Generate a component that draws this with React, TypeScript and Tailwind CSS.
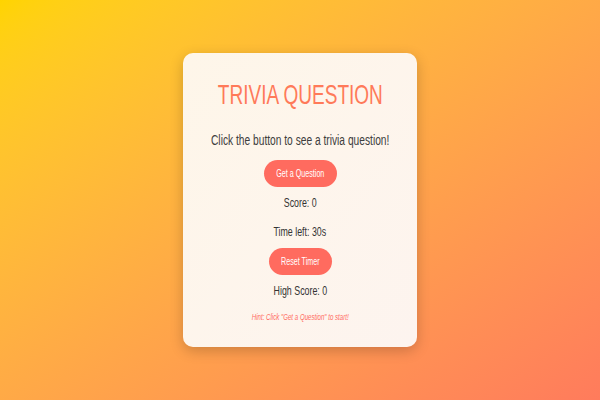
import type { ReactNode } from 'react';

// the reference font is much narrower than any installed family, so squeeze the text
function Narrow({ children, wide }: { children: ReactNode; wide?: boolean }) {
  return (
    <span className={`inline-block whitespace-nowrap ${wide ? 'scale-x-[0.73]' : 'scale-x-[0.68]'}`}>
      {children}
    </span>
  );
}

export default function App() {
  return (
    <div
      className="flex h-[400px] w-[600px] items-center justify-center bg-gradient-to-br from-[#ffd400] to-[#ff7b5c]"
      style={{ fontFamily: '"Liberation Sans", Arial, sans-serif' }}
    >
      <div className="flex h-[294px] w-[234px] flex-col items-center rounded-[10px] bg-gradient-to-br from-[#fef6e9] to-[#fdf4ef] pt-[28px] text-center shadow-[0_4px_14px_rgba(0,0,0,0.2)]">
        <h1 className="text-[28px] leading-none text-[#ff7a59]">
          <Narrow>TRIVIA QUESTION</Narrow>
        </h1>
        <p className="mt-[24px] text-[14px] leading-none text-[#3d3d3d]">
          <Narrow wide>Click the button to see a trivia question!</Narrow>
        </p>
        <button className="mt-[13px] h-[27px] w-[73px] rounded-full bg-[#ff6b5f] text-[10.5px] leading-none text-white">
          <Narrow>Get a Question</Narrow>
        </button>
        <p className="mt-[9px] text-[13px] leading-none text-[#333]">
          <Narrow>Score: 0</Narrow>
        </p>
        <p className="mt-[16px] text-[13px] leading-none text-[#333]">
          <Narrow>Time left: 30s</Narrow>
        </p>
        <button className="mt-[10px] h-[27px] w-[63px] rounded-full bg-[#ff6b5f] text-[10.5px] leading-none text-white">
          <Narrow>Reset Timer</Narrow>
        </button>
        <p className="mt-[9px] text-[13px] leading-none text-[#333]">
          <Narrow>High Score: 0</Narrow>
        </p>
        <p className="mt-[16px] text-[9px] italic leading-none text-[#ff6b5f]">
          <Narrow>Hint: Click "Get a Question" to start!</Narrow>
        </p>
      </div>
    </div>
  );
}
